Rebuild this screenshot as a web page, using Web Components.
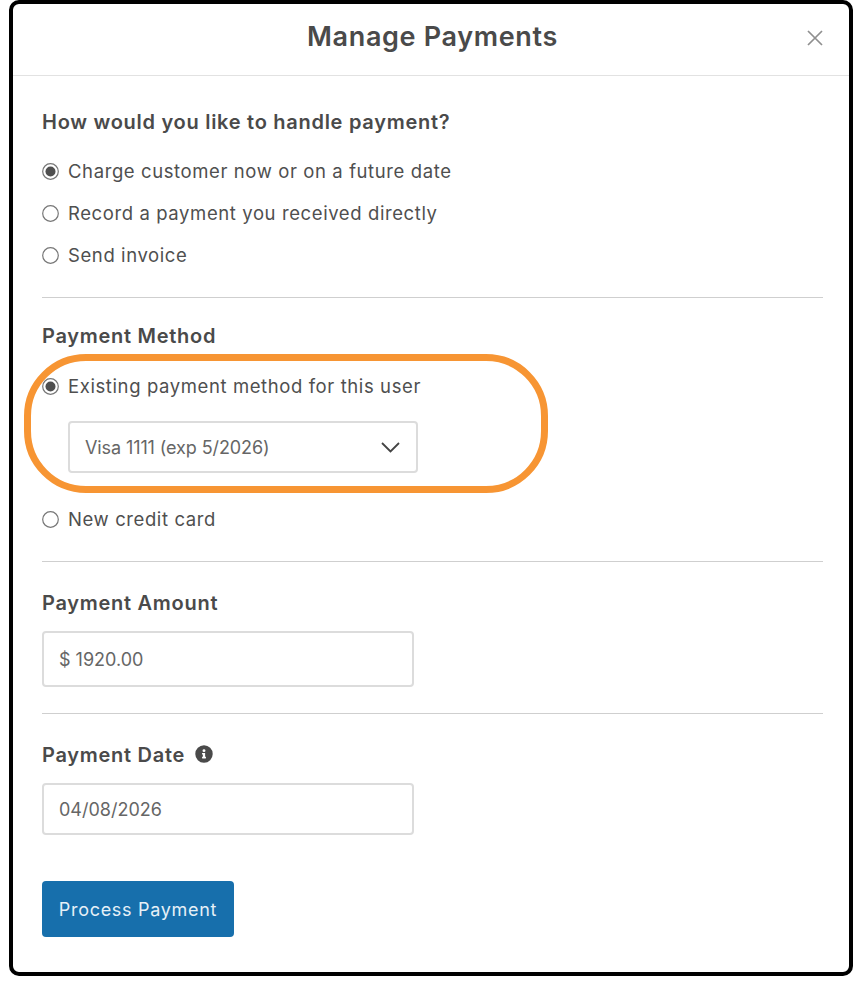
<!DOCTYPE html>
<html>
<head>
<meta charset="utf-8">
<title>Manage Payments</title>
<style>
    html, body { margin: 0; background: #fff; }
    body { font-family: "Inter", "Liberation Sans", sans-serif; color: #4a4a4a; }
</style>
</head>
<body>
<payment-modal heading="Manage Payments">
    <form-section label="How would you like to handle payment?" style="--label-gap: 16px; padding-top: 34px; padding-bottom: 21px;">
        <radio-option checked>Charge customer now or on a future date</radio-option>
        <radio-option>Record a payment you received directly</radio-option>
        <radio-option>Send invoice</radio-option>
    </form-section>
    <form-section label="Payment Method" style="--label-gap: 17px; padding-top: 26px; padding-bottom: 21px;">
        <radio-option checked>Existing payment method for this user</radio-option>
        <select-field value="Visa 1111 (exp 5/2026)"></select-field>
        <radio-option>New credit card</radio-option>
    </form-section>
    <form-section label="Payment Amount" style="--label-gap: 16px; padding-top: 29px; padding-bottom: 26px;">
        <text-field value="$ 1920.00" height="56"></text-field>
    </form-section>
    <form-section label="Payment Date" info last style="--label-gap: 16px; padding-top: 29px; padding-bottom: 46px;">
        <text-field value="04/08/2026" height="52"></text-field>
    </form-section>
    <primary-button>Process Payment</primary-button>
</payment-modal>

<script>
// modal frame, with the header and the orange highlight ring on top
class PaymentModal extends HTMLElement {
    constructor() {
        super();
        this.attachShadow({ mode: 'open' });
    }

    connectedCallback() {
        this.shadowRoot.innerHTML = `
            <style>
                :host {
                    display: block;
                    position: relative;
                    box-sizing: border-box;
                    width: 844px;
                    height: 976px;
                    margin-left: 9px;
                    background: #fff;
                    border: 4px solid #000;
                    border-radius: 10px;
                }
                header {
                    display: flex;
                    align-items: center;
                    justify-content: center;
                    position: relative;
                    box-sizing: border-box;
                    height: 72px;
                    padding: 0 0 7px 3px;
                    border-bottom: 1px solid #e2e2e2;
                }
                h1 {
                    margin: 0;
                    font-size: 27px;
                    font-weight: 600;
                    letter-spacing: 0.65px;
                    color: #4a4a4a;
                }
                .close {
                    position: absolute;
                    right: 26px;
                    top: 26px;
                    width: 16px;
                    height: 16px;
                }
                .body { padding: 0 26px 0 29px; }
                .ring {
                    position: absolute;
                    left: 11px;
                    top: 350px;
                    width: 524px;
                    height: 139px;
                    box-sizing: border-box;
                    border: 7px solid #f79533;
                    border-radius: 62px;
                    pointer-events: none;
                }
            </style>
            <header>
                <h1>${this.getAttribute('heading')}</h1>
                <svg class="close" viewBox="0 0 16 16" fill="none" stroke="#8f8f8f" stroke-width="1.7">
                    <path d="M1 1L15 15M15 1L1 15"/>
                </svg>
            </header>
            <div class="body"><slot></slot></div>
            <div class="ring"></div>
        `;
    }
}

// titled block; a rule under it except on the last one
class FormSection extends HTMLElement {
    constructor() {
        super();
        this.attachShadow({ mode: 'open' });
    }

    connectedCallback() {
        const info = this.hasAttribute('info') ? `
            <svg class="info" viewBox="0 0 512 512" fill="#4a4a4a">
                <path fill-rule="evenodd" d="M256 8a248 248 0 1 0 0 496 248 248 0 0 0 0-496zm0 110a42 42 0 1 1 0 84 42 42 0 0 1 0-84zm56 254c0 6.600-5.400 12-12 12h-88c-6.600 0-12-5.400-12-12v-24c0-6.600 5.400-12 12-12h12v-64h-12c-6.600 0-12-5.400-12-12v-24c0-6.600 5.400-12 12-12h64c6.600 0 12 5.400 12 12v100h12c6.600 0 12 5.400 12 12z"/>
            </svg>` : '';
        this.shadowRoot.innerHTML = `
            <style>
                :host {
                    display: block;
                    border-bottom: 1px solid #cfcfcf;
                }
                :host([last]) { border-bottom: 0; }
                .label {
                    display: flex;
                    align-items: center;
                    gap: 10px;
                    height: 24px;
                    margin-bottom: var(--label-gap, 16px);
                    font-size: 20px;
                    font-weight: 600;
                    letter-spacing: 0.72px;
                }
                .info { width: 18px; height: 18px; margin-top: -2px; }
            </style>
            <div class="label"><span>${this.getAttribute('label')}</span>${info}</div>
            <slot></slot>
        `;
    }
}

class RadioOption extends HTMLElement {
    constructor() {
        super();
        this.attachShadow({ mode: 'open' });
    }

    connectedCallback() {
        const dot = this.hasAttribute('checked') ? '<circle cx="8.500" cy="8.500" r="5" fill="#4f4f4f"/>' : '';
        this.shadowRoot.innerHTML = `
            <style>
                :host {
                    display: flex;
                    align-items: center;
                    gap: 9px;
                    height: 42px;
                    font-size: 18.500px;
                    letter-spacing: 0.6px;
                    color: #4f4f4f;
                }
                svg { width: 17px; height: 17px; flex: none; }
            </style>
            <svg viewBox="0 0 17 17">
                <circle cx="8.500" cy="8.500" r="7.800" fill="#fff" stroke="#777" stroke-width="1.200"/>
                ${dot}
            </svg>
            <span><slot></slot></span>
        `;
    }
}

class SelectField extends HTMLElement {
    constructor() {
        super();
        this.attachShadow({ mode: 'open' });
    }

    connectedCallback() {
        this.shadowRoot.innerHTML = `
            <style>
                :host {
                    display: flex;
                    align-items: center;
                    justify-content: space-between;
                    box-sizing: border-box;
                    width: 350px;
                    height: 52px;
                    margin: 14px 0 25px 26px;
                    padding: 0 16px 0 15px;
                    border: 2px solid #dcdcdc;
                    border-radius: 4px;
                    font-size: 18px;
                    letter-spacing: -0.1px;
                    color: #666;
                }
                svg { width: 19px; height: 11px; }
            </style>
            <span>${this.getAttribute('value')}</span>
            <svg viewBox="0 0 19 11" fill="none" stroke="#444" stroke-width="1.800">
                <path d="M1 1L9.500 9.500L18 1"/>
            </svg>
        `;
    }
}

class TextField extends HTMLElement {
    constructor() {
        super();
        this.attachShadow({ mode: 'open' });
    }

    connectedCallback() {
        this.shadowRoot.innerHTML = `
            <style>
                :host {
                    display: flex;
                    align-items: center;
                    box-sizing: border-box;
                    width: 372px;
                    height: ${this.getAttribute('height')}px;
                    padding: 0 15px;
                    border: 2px solid #dcdcdc;
                    border-radius: 4px;
                    font-size: 18px;
                    color: #666;
                }
            </style>
            <span>${this.getAttribute('value')}</span>
        `;
    }
}

class PrimaryButton extends HTMLElement {
    constructor() {
        super();
        this.attachShadow({ mode: 'open' });
    }

    connectedCallback() {
        this.shadowRoot.innerHTML = `
            <style>
                :host {
                    display: flex;
                    align-items: center;
                    justify-content: center;
                    width: 192px;
                    height: 56px;
                    background: #176fac;
                    border-radius: 4px;
                    font-size: 18px;
                    letter-spacing: 0.7px;
                    color: #e6f0f7;
                }
            </style>
            <slot></slot>
        `;
    }
}

customElements.define('payment-modal', PaymentModal);
customElements.define('form-section', FormSection);
customElements.define('radio-option', RadioOption);
customElements.define('select-field', SelectField);
customElements.define('text-field', TextField);
customElements.define('primary-button', PrimaryButton);
</script>
</body>
</html>
